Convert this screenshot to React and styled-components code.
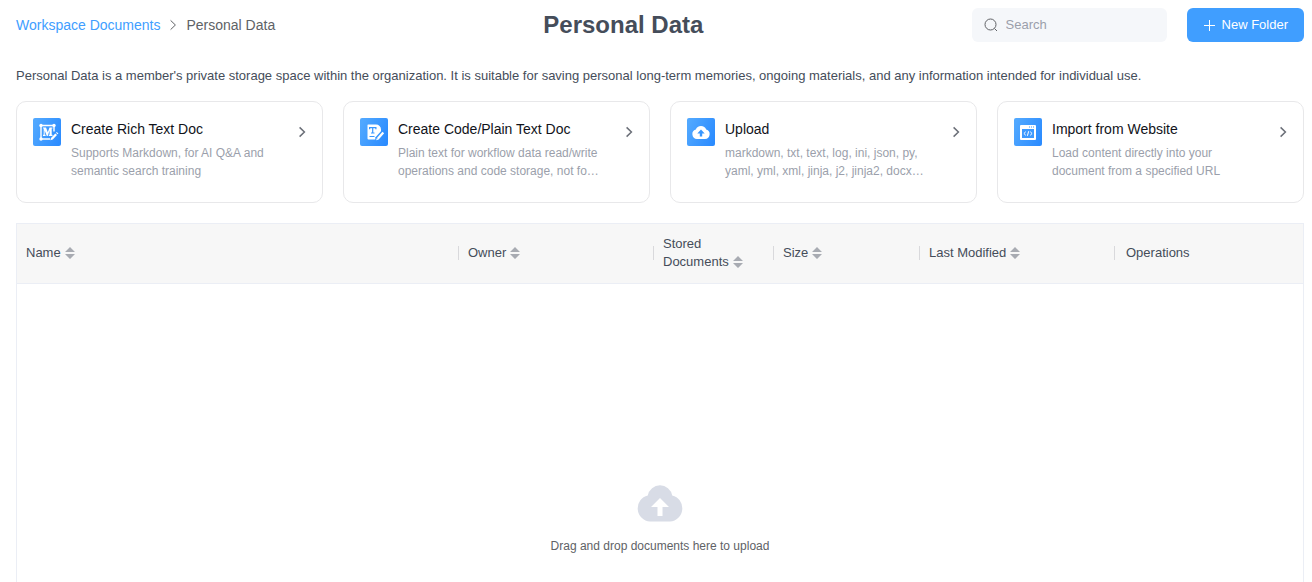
import React from "react";
import styled, { createGlobalStyle } from "styled-components";

const GlobalStyle = createGlobalStyle`
  *, *::before, *::after { box-sizing: border-box; }
  html, body { margin: 0; height: 100%; }
  body {
    overflow: hidden;
    background: #fff;
    color: #454d5a;
    font-family: "Liberation Sans", Arial, sans-serif;
    font-size: 13px;
    line-height: 18px;
  }
  #root { height: 100%; }
  button, input { font: inherit; color: inherit; }
  button { cursor: pointer; }
`;

const Page = styled.main`
  display: flex;
  flex-direction: column;
  min-height: 100%;
  padding: 8px 8px 0 16px;
`;

const Header = styled.header`
  display: flex;
  align-items: center;
  justify-content: space-between;
`;

const Breadcrumb = styled.nav`
  display: flex;
  align-items: center;
  gap: 6px;
  font-size: 14px;
  color: #606266;
`;

const CrumbLink = styled.a`
  color: #409eff;
  text-decoration: none;
`;

const Title = styled.h1`
  margin: 0;
  font-size: 24px;
  line-height: 34px;
  font-weight: 700;
`;

const Actions = styled.div`
  display: flex;
  gap: 20px;
`;

const SearchBox = styled.label`
  display: flex;
  align-items: center;
  gap: 8px;
  width: 195px;
  height: 34px;
  padding: 0 12px;
  border-radius: 6px;
  background: #f5f7fa;
  color: #606266;
`;

const SearchInput = styled.input`
  flex: 1;
  min-width: 0;
  padding: 0;
  border: 0;
  outline: 0;
  background: transparent;
  &::placeholder { color: #9b9fab; opacity: 1; }
`;

const PrimaryButton = styled.button`
  display: flex;
  align-items: center;
  gap: 5px;
  height: 34px;
  padding: 0 16px;
  border: 0;
  border-radius: 6px;
  background: #409eff;
  color: #fff;
  font-weight: 500;
`;

const Intro = styled.p`
  margin: 25px 0 16px;
`;

const CardGrid = styled.div`
  display: grid;
  grid-template-columns: repeat(4, 1fr);
  gap: 20px;
`;

const Card = styled.button`
  display: flex;
  align-items: flex-start;
  gap: 10px;
  min-height: 102px;
  padding: 16px 13px 16px 16px;
  border: 1px solid #e8e8ea;
  border-radius: 10px;
  background: #fff;
  text-align: left;
  & > svg { flex: none; }
`;

const CardText = styled.span`
  display: flex;
  flex-direction: column;
  flex: 1;
  gap: 4px;
  min-width: 0;
`;

const CardTitle = styled.span`
  font-size: 14px;
  line-height: 22px;
  color: #11131a;
`;

const CardDescription = styled.span`
  font-size: 12px;
  color: #9b9fab;
`;

const CardArrow = styled.span`
  display: flex;
  padding-top: 7px;
  color: #6b6f78;
`;

const Panel = styled.section`
  display: flex;
  flex-direction: column;
  flex: 1;
  margin-top: 20px;
  border: 1px solid #ebeef5;
  border-bottom: 0;
`;

const Table = styled.table`
  width: 100%;
  table-layout: fixed;
  border-collapse: separate;
  border-spacing: 0;
  background: #f7f7f7;
`;

const HeadCell = styled.th`
  width: ${(p) => (p.$width ? `${p.$width}px` : "auto")};
  height: 60px;
  padding: 0 0 2px;
  border-bottom: 1px solid #ebeef5;
  font-weight: 400;
  text-align: left;
`;

const HeadContent = styled.div`
  display: flex;
  align-items: center;
  height: 14px;
  padding: 0 8px 0 ${(p) => (p.$last ? 11 : 9)}px;
  border-right: ${(p) => (p.$last ? 0 : "1px solid #d9d9dc")};
`;

const SortButton = styled.button`
  padding: 0;
  border: 0;
  background: none;
  text-align: left;
  & > svg { margin-left: 3px; vertical-align: -2px; }
`;

const DropZone = styled.div`
  display: flex;
  flex-direction: column;
  align-items: center;
  flex: 1;
  padding-top: 192px;
  font-size: 12px;
  color: #606266;
`;

const DropText = styled.p`
  margin: 7px 0 0;
`;

const SearchIcon = () => (
  <svg width="14" height="14" viewBox="0 0 14 14" fill="none" stroke="currentColor" aria-hidden="true">
    <circle cx="6.5" cy="6.5" r="5.5" />
    <path d="M10.5 10.5 13 13" />
  </svg>
);

const PlusIcon = () => (
  <svg width="14" height="14" viewBox="0 0 14 14" fill="none" stroke="currentColor" aria-hidden="true">
    <path d="M1 7.5H12M6.5 2V13" />
  </svg>
);

const Chevron = ({ weight = 1 }) => (
  <svg width="14" height="14" viewBox="0 0 14 14" fill="none" stroke="currentColor" strokeWidth={weight} aria-hidden="true">
    <path d="m4.6 2.4 4.8 4.6-4.8 4.6" />
  </svg>
);

const SortIcon = () => (
  <svg width="12" height="12" viewBox="0 0 12 12" fill="#a8abb2" aria-hidden="true">
    <path d="M6 0 11 5H1zM6 12 1 7h10z" />
  </svg>
);

const IconTile = ({ id, children }) => (
  <svg width="28" height="28" viewBox="0 0 28 28" fill="none" aria-hidden="true">
    <defs>
      <linearGradient id={id} x1="0" y1="8" x2="28" y2="20" gradientUnits="userSpaceOnUse">
        <stop stopColor="#51a8ff" />
        <stop offset="1" stopColor="#2c8cff" />
      </linearGradient>
    </defs>
    <rect width="28" height="28" rx="2" fill={`url(#${id})`} />
    {children}
  </svg>
);

const RichTextIcon = () => (
  <IconTile id="tile-rich">
    <path d="M8 7.500h13v6M8 7.500v13.500h9" stroke="#fff" strokeWidth="1.400" />
    <g fill="#fff">
      <circle cx="8" cy="7.500" r="1.700" />
      <circle cx="21" cy="7.500" r="1.700" />
      <circle cx="8" cy="21" r="1.700" />
      <path d="M10 9.500h3l1.800 4.700 1.700-4.700h3v1.100h-.8v6.200h.8V18h-3.700v-1.200h.8v-4.400L14.700 18h-.9l-2.100-5.500v4.300h.9V18H10v-1.200h.7v-6.200H10z" />
      <path d="m18 20 4.300-4.600 1.700 1.500-4.200 4.500-2.500.8z" />
      <path d="m23 14.700.7-.7 1.700 1.400-.7.8z" />
    </g>
  </IconTile>
);

const PlainTextIcon = () => (
  <IconTile id="tile-plain">
    <path d="M8 6.500h8a5 5 0 0 1 5 5v3L15 21.500H8.500a1 1 0 0 1-1-1V7a.5.5 0 0 1 .5-.5z" fill="#fff" />
    <path d="M9.600 11.200V9.600h6.300v1.600M12.700 9.500v5.500M11 15h3.500M9.500 18.500h5" stroke="#3997ff" strokeWidth="1.200" />
    <path d="m16.500 21.500 6.500-7.200" stroke="#3595ff" strokeWidth="4.400" />
    <path d="m17.800 20.700 5.500-6.100" stroke="#fff" strokeWidth="2.300" />
    <path d="m16.900 19.900 1.900 1.700-2.700.6z" fill="#fff" />
  </IconTile>
);

const UploadIcon = () => (
  <IconTile id="tile-upload">
    <path d="M10 21a4.800 4.800 0 0 1-1.200-9.400 5.500 5.500 0 0 1 10.400 0A4.800 4.800 0 0 1 18 21z" fill="#fff" />
    <path d="m14 11.500 3.700 3.900h-2.500v3h-2.400v-3h-2.500z" fill="#3997ff" />
  </IconTile>
);

const WebsiteIcon = () => (
  <IconTile id="tile-website">
    <rect x="6" y="7" width="16" height="15" rx="1" fill="#fff" />
    <rect x="8" y="11" width="12" height="9" fill="#3d9aff" />
    <path d="M15 9h1M17 9h1M19 9h1" stroke="#3d9aff" />
    <path d="m11.800 13.700-1.900 1.800 1.900 1.800M16.200 13.700l1.900 1.800-1.900 1.800M14.700 13.200l-1.300 4.600" stroke="#fff" />
  </IconTile>
);

const CloudUpload = () => (
  <svg width="54" height="54" viewBox="0 0 54 54" aria-hidden="true">
    <path d="M17 45.500A13.200 13.200 0 0 1 14.800 19.500 12.400 12.400 0 0 1 39.200 19.500 13.200 13.200 0 0 1 37 45.500z" fill="#d8dce6" />
    <path d="m27 22 9 9h-6.500v9h-5v-9H18z" fill="#fff" />
  </svg>
);

const cards = [
  { title: "Create Rich Text Doc", text: "Supports Markdown, for AI Q&A and semantic search training", Icon: RichTextIcon },
  { title: "Create Code/Plain Text Doc", text: "Plain text for workflow data read/write operations and code storage, not fo…", Icon: PlainTextIcon },
  { title: "Upload", text: "markdown, txt, text, log, ini, json, py, yaml, yml, xml, jinja, j2, jinja2, docx…", Icon: UploadIcon },
  { title: "Import from Website", text: "Load content directly into your document from a specified URL", Icon: WebsiteIcon },
];

const columns = [
  { label: "Name", sortable: true },
  { label: "Owner", width: 195, sortable: true },
  { label: "Stored Documents", width: 120, sortable: true },
  { label: "Size", width: 146, sortable: true },
  { label: "Last Modified", width: 195, sortable: true },
  { label: "Operations", width: 188 },
];

export default function App() {
  return (
    <>
      <GlobalStyle />
      <Page>
        <Header>
          <Breadcrumb aria-label="Breadcrumb">
            <CrumbLink href="#documents">Workspace Documents</CrumbLink>
            <Chevron />
            <span aria-current="page">Personal Data</span>
          </Breadcrumb>
          <Title>Personal Data</Title>
          <Actions>
            <SearchBox>
              <SearchIcon />
              <SearchInput type="text" placeholder="Search" aria-label="Search" />
            </SearchBox>
            <PrimaryButton type="button">
              <PlusIcon />
              New Folder
            </PrimaryButton>
          </Actions>
        </Header>
        <Intro>
          Personal Data is a member's private storage space within the organization. It is suitable for saving
          personal long-term memories, ongoing materials, and any information intended for individual use.
        </Intro>
        <CardGrid>
          {cards.map(({ title, text, Icon }) => (
            <Card key={title} type="button">
              <Icon />
              <CardText>
                <CardTitle>{title}</CardTitle>
                <CardDescription>{text}</CardDescription>
              </CardText>
              <CardArrow>
                <Chevron weight={1.5} />
              </CardArrow>
            </Card>
          ))}
        </CardGrid>
        <Panel>
          <Table>
            <thead>
              <tr>
                {columns.map(({ label, width, sortable }) => (
                  <HeadCell key={label} $width={width} scope="col">
                    <HeadContent $last={!sortable}>
                      {sortable ? (
                        <SortButton type="button">
                          {label}
                          <SortIcon />
                        </SortButton>
                      ) : (
                        label
                      )}
                    </HeadContent>
                  </HeadCell>
                ))}
              </tr>
            </thead>
          </Table>
          <DropZone>
            <CloudUpload />
            <DropText>Drag and drop documents here to upload</DropText>
          </DropZone>
        </Panel>
      </Page>
    </>
  );
}
